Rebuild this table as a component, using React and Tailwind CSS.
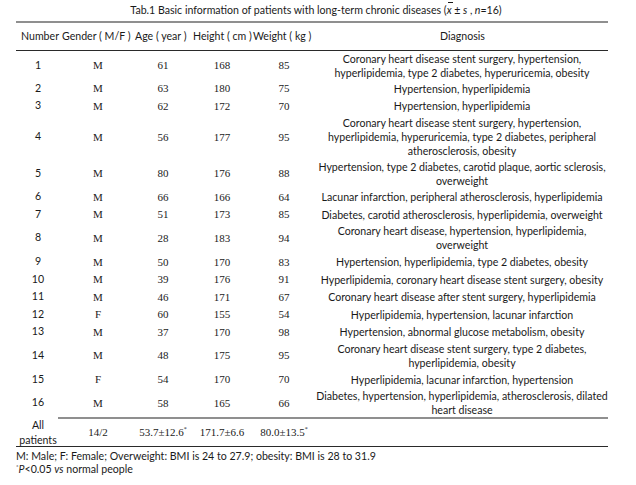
const rows = [
  { n: '1', g: 'M', age: '61', h: '168', w: '85', ht: 'h-[29px]', d: ['Coronary heart disease stent surgery, hypertension,', 'hyperlipidemia, type 2 diabetes, hyperuricemia, obesity'] },
  { n: '2', g: 'M', age: '63', h: '180', w: '75', ht: 'h-[17px]', d: ['Hypertension, hyperlipidemia'] },
  { n: '3', g: 'M', age: '62', h: '172', w: '70', ht: 'h-[18px]', d: ['Hypertension, hyperlipidemia'] },
  { n: '4', g: 'M', age: '56', h: '177', w: '95', ht: 'h-[44px]', d: ['Coronary heart disease stent surgery, hypertension,', 'hyperlipidemia, hyperuricemia, type 2 diabetes, peripheral', 'atherosclerosis, obesity'] },
  { n: '5', g: 'M', age: '80', h: '176', w: '88', ht: 'h-[29px]', d: ['Hypertension, type 2 diabetes, carotid plaque, aortic sclerosis,', 'overweight'] },
  { n: '6', g: 'M', age: '66', h: '166', w: '64', ht: 'h-[18px]', d: ['Lacunar infarction, peripheral atherosclerosis, hyperlipidemia'] },
  { n: '7', g: 'M', age: '51', h: '173', w: '85', ht: 'h-[17px]', d: ['Diabetes, carotid atherosclerosis, hyperlipidemia, overweight'] },
  { n: '8', g: 'M', age: '28', h: '183', w: '94', ht: 'h-[30px]', d: ['Coronary heart disease, hypertension, hyperlipidemia,', 'overweight'] },
  { n: '9', g: 'M', age: '50', h: '170', w: '83', ht: 'h-[18px]', d: ['Hypertension, hyperlipidemia, type 2 diabetes, obesity'] },
  { n: '10', g: 'M', age: '39', h: '176', w: '91', ht: 'h-[17px]', d: ['Hyperlipidemia, coronary heart disease stent surgery, obesity'] },
  { n: '11', g: 'M', age: '46', h: '171', w: '67', ht: 'h-[18px]', d: ['Coronary heart disease after stent surgery, hyperlipidemia'] },
  { n: '12', g: 'F', age: '60', h: '155', w: '54', ht: 'h-[17px]', d: ['Hyperlipidemia, hypertension, lacunar infarction'] },
  { n: '13', g: 'M', age: '37', h: '170', w: '98', ht: 'h-[18px]', d: ['Hypertension, abnormal glucose metabolism, obesity'] },
  { n: '14', g: 'M', age: '48', h: '175', w: '95', ht: 'h-[29px]', d: ['Coronary heart disease stent surgery, type 2 diabetes,', 'hyperlipidemia, obesity'] },
  { n: '15', g: 'F', age: '54', h: '170', w: '70', ht: 'h-[19px]', d: ['Hyperlipidemia, lacunar infarction, hypertension'] },
  { n: '16', g: 'M', age: '58', h: '165', w: '66', ht: 'h-[28px]', d: ['Diabetes, hypertension, hyperlipidemia, atherosclerosis, dilated', 'heart disease'] },
]

const sans = "font-['Lato','Noto_Sans_CJK_SC',sans-serif]"
const serif = "font-['Liberation_Serif',serif] text-[11px]"

function Cell({ w, className = '', children }) {
  return <div className={`${w} flex items-center justify-center whitespace-nowrap ${className}`}>{children}</div>
}

export default function App() {
  return (
    <div className={`w-[636px] h-[485px] bg-white text-[#1a1a1a] ${sans} text-[10.6px]`}>
      <div className="h-[21px] flex items-center justify-center pt-px pr-[4px]">
        Tab.1 Basic information of patients with long-term chronic diseases (
        <span className="italic relative">
          x<span className="absolute left-[1px] top-[-1px] w-[5px] border-t border-[#1a1a1a]"></span>
        </span>
        &nbsp;± <span className="italic">&nbsp;s</span>&nbsp;, <span className="italic">&nbsp;n</span>=16)
      </div>
      <div className="ml-4 w-[592px]">
        <div className="h-[2px] bg-[#8f8f8f]"></div>
        <div className="flex items-center h-[28px] border-b border-[#2a2a2a] pl-[5px] whitespace-nowrap">
          <div className="w-[41px]">Number</div>
          <div className="w-[73px]">Gender ( M/F )</div>
          <div className="w-[58px]">Age ( year )</div>
          <div className="w-[60px]">Height ( cm )</div>
          <div className="w-[60px]">Weight ( kg )</div>
          <div className="flex-1 text-center pl-[4px]">Diagnosis</div>
        </div>
        {rows.map((r) => (
          <div key={r.n} className={`flex ${r.ht}`}>
            <Cell w="w-[44px]">{r.n}</Cell>
            <Cell w="w-[76px]" className={serif}>{r.g}</Cell>
            <Cell w="w-[54px]" className={serif}>{r.age}</Cell>
            <Cell w="w-[64px]" className={serif}>{r.h}</Cell>
            <Cell w="w-[60px]" className={serif}>{r.w}</Cell>
            <div className="flex-1 flex flex-col items-center justify-center leading-[14px] whitespace-nowrap pl-[2px]">
              {r.d.map((l) => (
                <div key={l}>{l}</div>
              ))}
            </div>
          </div>
        ))}
        <div className="flex">
          <div className="w-[42px]"></div>
          <div className="flex-1 h-[2px] bg-[#8f8f8f]"></div>
        </div>
        <div className="flex h-[28px] border-b border-[#2a2a2a]">
          <div className="w-[44px] flex flex-col items-center justify-center leading-[15px]">
            <div>All</div>
            <div>patients</div>
          </div>
          <Cell w="w-[76px]" className={serif}>14/2</Cell>
          <Cell w="w-[54px]" className={serif}>
            53.7±12.6<sup className="text-[6px] -top-[4px]">*</sup>
          </Cell>
          <Cell w="w-[64px]" className={serif}>171.7±6.6</Cell>
          <Cell w="w-[60px]" className={serif}>
            80.0±13.5<sup className="text-[6px] -top-[4px]">*</sup>
          </Cell>
          <div className="flex-1"></div>
        </div>
        <div className="pt-[3px] leading-[13px]">
          <div>M: Male; F: Female; Overweight: BMI is 24 to 27.9; obesity: BMI is 28 to 31.9</div>
          <div>
            <sup className="text-[6px] -top-[4px]">*</sup>
            <span className="italic">P</span>&lt;0.05 <span className="italic">vs</span> normal people
          </div>
        </div>
      </div>
    </div>
  )
}
